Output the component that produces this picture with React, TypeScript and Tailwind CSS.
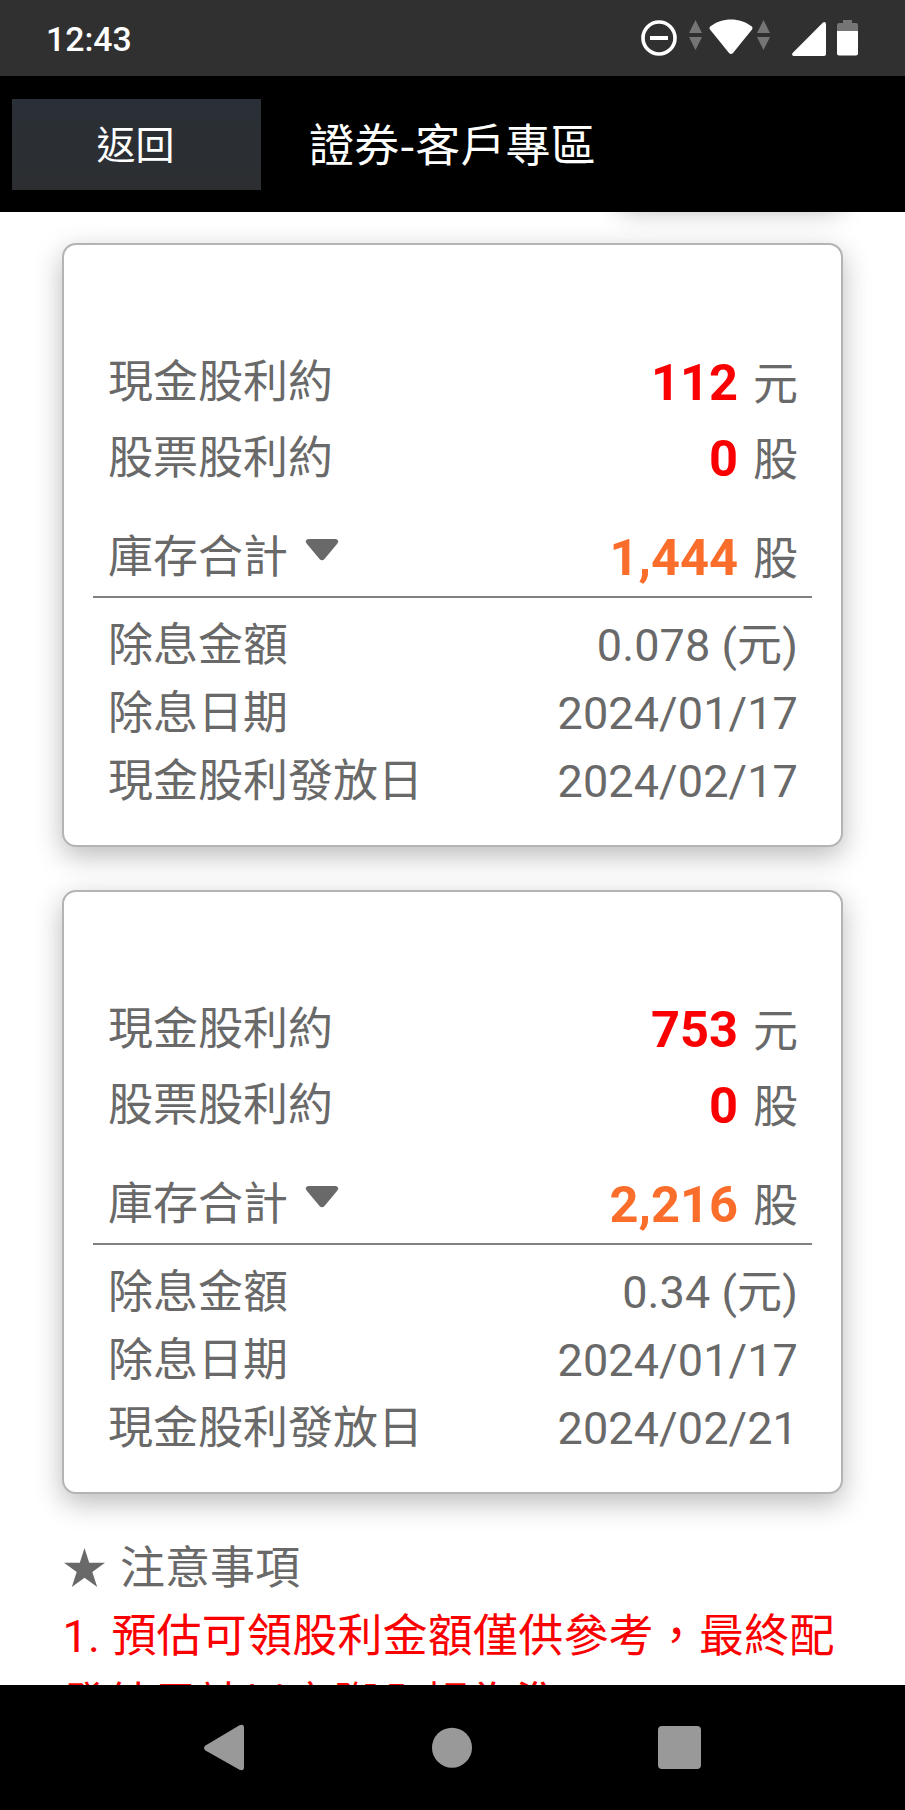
const dividends = [
  { cash: '112', stock: '0', total: '1,444', amount: '0.078 (元)', exDate: '2024/01/17', payDate: '2024/02/17' },
  { cash: '753', stock: '0', total: '2,216', amount: '0.34 (元)', exDate: '2024/01/17', payDate: '2024/02/21' },
];

function Traffic() {
  return (
    <svg className="h-[30px] w-[13px]" viewBox="0 0 13 30" fill="#757575">
      <path d="M6.5 0 13 13H0zM0 17h13L6.5 30z" />
    </svg>
  );
}

function StatusBar() {
  return (
    <div className="flex h-[76px] shrink-0 items-start bg-[#303030] pl-[46px] text-white">
      <div className="w-[595px] pt-[20px] text-[33.8px] leading-[40px] font-medium">12:43</div>
      <svg className="mt-[20px] h-[36px] w-[36px]" viewBox="0 0 36 36" fill="none" stroke="#fff">
        <circle cx="18" cy="18" r="16" strokeWidth="3.6" />
        <path d="M9 18h18" strokeWidth="4" />
      </svg>
      <div className="ml-[12px] flex pt-[20px]">
        <Traffic />
        <svg className="-mt-px ml-[7px] h-[36px] w-[44px]" viewBox="0 0 44 36" fill="#fff">
          <path d="M1.2 7.5C13-2 31-2 42.8 7.500Q44 9 43 10.500L24 34Q22 36 20 34L1 10.500Q0 9 1.200 7.500z" />
        </svg>
        <div className="ml-[4px]">
          <Traffic />
        </div>
      </div>
      <svg className="mt-[22px] ml-[22px] h-[34px] w-[34px]" viewBox="0 0 34 34" fill="#fff">
        <path d="M34 2V32Q34 34 32 34H2Q-1 33.500 .6 31L31 .6Q33.500-1 34 2z" />
      </svg>
      <svg className="mt-[20px] ml-[11px] h-[36px] w-[21px]" viewBox="0 0 21 36">
        <path d="M6 0h9v3h4q2 0 2 2v6H0V5q0-2 2-2h4z" fill="#757575" />
        <path d="M0 11h21v22.500q0 2-2 2H2q-2 0-2-2z" fill="#fff" />
      </svg>
    </div>
  );
}

function Header() {
  return (
    <header className="z-10 flex h-[136px] shrink-0 items-center bg-black pl-[12px] text-white">
      <button className="h-[91px] w-[249px] bg-linear-to-b from-[#2a3037] to-[#2c2e31] pt-[3px] pr-[2px] text-[39px] leading-[60px]">
        返回
      </button>
      <h1 className="ml-[48px] pb-[3px] font-['Noto_Sans_CJK_TC',sans-serif] text-[45px] leading-[68px] tracking-[0.2px]">
        證券-客戶專區
      </h1>
    </header>
  );
}

function Row({ label, value, unit, tone }: { label: string; value: string; unit: string; tone: string }) {
  return (
    <div className="flex h-[68px] items-center justify-between pr-[14px] pl-[15px]">
      <div className="flex">
        {label}
        {label === '庫存合計' && (
          <svg className="mt-[15px] ml-[17px] h-[22px] w-[34px]" viewBox="0 0 34 22" fill="#696969">
            <path d="M3.500 0h27Q35 1 32 5L19.500 20Q17 22.500 14.500 20L2 5Q-1 1 3.500 0z" />
          </svg>
        )}
      </div>
      <div className="flex items-baseline pt-[2px]">
        <span className={tone}>{value}</span>
        <span className="ml-[15px]">{unit}</span>
      </div>
    </div>
  );
}

function Detail({ label, value }: { label: string; value: string }) {
  return (
    <div className="flex justify-between pr-[14px] pl-[15px] leading-[68px]">
      <span>{label}</span>
      <span className="tracking-[0.1px]">{value}</span>
    </div>
  );
}

export default function App() {
  const red = 'text-[50.6px] font-bold text-[#fb0000]';
  const orange = 'text-[50.6px] font-bold text-[#fb6d2a]';
  return (
    <div
      lang="zh-Hant"
      className="flex h-[1810px] w-[905px] flex-col overflow-hidden bg-white font-[Roboto,'Noto_Sans_CJK_TC',sans-serif] text-[45px] leading-[67.7px] text-[#696969]"
    >
      <StatusBar />
      <Header />
      <main className="relative min-h-0 flex-1 overflow-hidden px-[62px] pt-[31px]">
        <div className="absolute -top-[63px] left-[618px] h-[54px] w-[225px] rounded-[14px] shadow-[0_9px_25px_rgba(0,0,0,0.25)]" />
        {dividends.map((d) => (
          <section
            key={d.payDate}
            className="relative mb-[43px] h-[604px] w-[781px] rounded-[14px] border-2 border-[#b4b4b4] bg-white px-[29px] pt-[104px] shadow-[0_9px_28px_rgba(0,0,0,0.27)]"
          >
            <Row label="現金股利約" value={d.cash} unit="元" tone={red} />
            <div className="mt-[8px]">
              <Row label="股票股利約" value={d.stock} unit="股" tone={red} />
            </div>
            <div className="mt-[31px]">
              <Row label="庫存合計" value={d.total} unit="股" tone={orange} />
            </div>
            <hr className="mt-[4px] mb-[14px] border-t-2 border-[#808080]" />
            <Detail label="除息金額" value={d.amount} />
            <Detail label="除息日期" value={d.exDate} />
            <Detail label="現金股利發放日" value={d.payDate} />
          </section>
        ))}
        <div className="-mt-[2px] flex items-center pl-[2px]">
          <svg className="-mt-[3px] h-[39px] w-[41px]" viewBox="0 0 41 39" fill="#696969">
            <path d="M20.500 0 25.200 14.700H41L28.300 24 33.200 39 20.500 29.800 7.800 39 12.700 24 0 14.700H15.800z" />
          </svg>
          <span className="ml-[15px]">注意事項</span>
        </div>
        <p className="pt-[0.6px] pl-[0.5px] leading-[68px] tracking-[0.2px] whitespace-nowrap text-[#fb0000]">
          1. 預估可領股利金額僅供參考，最終配
          <br />
          發結果請以實際入帳為準
        </p>
      </main>
      <nav className="z-10 h-[125px] shrink-0 bg-black">
        <svg className="h-[125px] w-[905px]" viewBox="0 0 905 125" fill="#999">
          <path d="M239.500 40.300Q244 38.500 244 43V82Q244 86.500 239.500 84.800L205.500 65.500Q202.500 63 205.500 60.500z" />
          <circle cx="452" cy="62.700" r="20" />
          <rect x="658" y="41" width="43" height="43" rx="4" />
        </svg>
      </nav>
    </div>
  );
}
